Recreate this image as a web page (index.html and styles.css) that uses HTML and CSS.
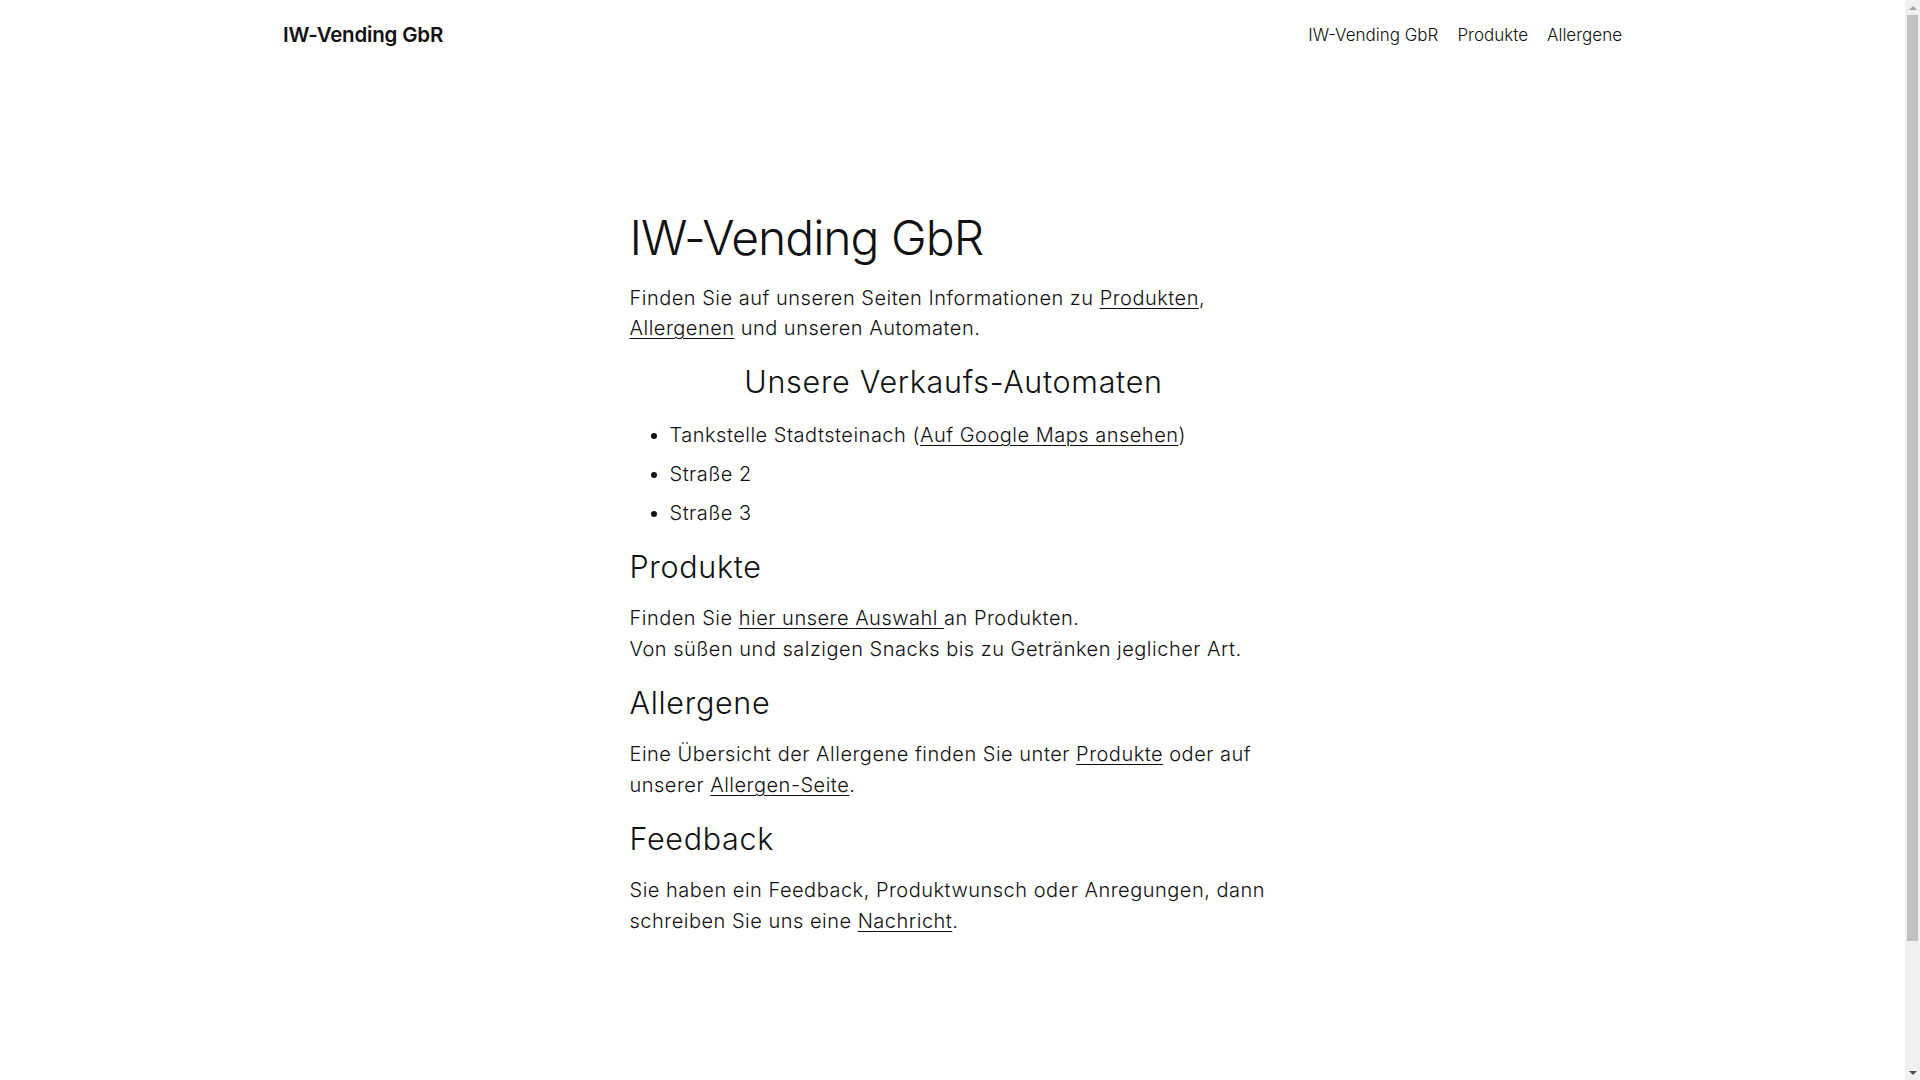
FILE: index.html
```html
<!DOCTYPE html>
<html lang="de">
<head>
<meta charset="utf-8">
<title>IW-Vending GbR</title>
<link rel="stylesheet" href="styles.css">
</head>
<body>
<header class="site-header">
  <a class="site-title" href="#">IW-Vending GbR</a>
  <nav class="site-nav">
    <a href="#">IW-Vending GbR</a>
    <a href="#">Produkte</a>
    <a href="#">Allergene</a>
  </nav>
</header>
<main class="content">
  <h1 class="page-title">IW-Vending GbR</h1>
  <p>Finden Sie auf unseren Seiten Informationen zu <a href="#">Produkten</a>, <a href="#">Allergenen</a> und unseren Automaten.</p>
  <h2 class="centered">Unsere Verkaufs-Automaten</h2>
  <ul class="machines">
    <li>Tankstelle Stadtsteinach (<a href="#">Auf Google Maps ansehen</a>)</li>
    <li>Straße 2</li>
    <li>Straße 3</li>
  </ul>
  <h2>Produkte</h2>
  <p>Finden Sie <a href="#">hier unsere Auswahl </a>an Produkten.<br>Von süßen und salzigen Snacks bis zu Getränken jeglicher Art.</p>
  <h2>Allergene</h2>
  <p>Eine Übersicht der Allergene finden Sie unter <a href="#">Produkte</a> oder auf unserer <a href="#">Allergen-Seite</a>.</p>
  <h2>Feedback</h2>
  <p>Sie haben ein Feedback, Produktwunsch oder Anregungen, dann schreiben Sie uns eine <a href="#">Nachricht</a>.</p>
</main>
<div class="scrollbar" aria-hidden="true">
  <div class="sb-btn sb-up"><span class="arrow-up"></span></div>
  <div class="sb-track"><div class="sb-thumb"></div></div>
  <div class="sb-btn sb-down"><span class="arrow-down"></span></div>
</div>
</body>
</html>
```
FILE: styles.css
```css
html, body {
  margin: 0;
  padding: 0;
}
body {
  background: #ffffff;
  color: #111111;
  font-family: Inter, "Noto Sans", "DejaVu Sans", sans-serif;
  font-size: 20px;
  font-weight: 300;
  line-height: 30.6px;
  letter-spacing: 0.5px;
  padding-right: 15px;
}
a {
  color: inherit;
}
.site-header {
  max-width: 1339px;
  height: 70px;
  margin: 0 auto;
  display: flex;
  align-items: center;
  justify-content: space-between;
  letter-spacing: 0;
}
.site-title {
  font-size: 20.5px;
  font-weight: 600;
  text-decoration: none;
  letter-spacing: -0.2px;
}
.site-nav {
  display: flex;
  gap: 19px;
}
.site-nav a {
  font-size: 17px;
  text-decoration: none;
}
.content {
  width: 648px;
  margin: 0 auto;
  padding: 139px 0 290px 2px;
}
.content h1,
.content h2,
.content p,
.content ul {
  margin: 0;
}
.page-title {
  font-size: 48px;
  font-weight: 300;
  line-height: 1.2;
  letter-spacing: -1px;
}
.page-title + p {
  margin-top: 16px;
}
.content h2 {
  font-size: 30.5px;
  font-weight: 300;
  line-height: 1.2;
  margin-top: 20.7px;
  letter-spacing: 0.7px;
}
.content h2 + p {
  margin-top: 17.5px;
}
.content h2 + ul {
  margin-top: 19px;
}
.centered {
  text-align: center;
}
.machines {
  padding-left: 40px;
}
.machines li + li {
  margin-top: 8.4px;
}
.content a {
  text-decoration: underline;
  text-underline-offset: 3px;
  text-decoration-thickness: 1px;
}

/* classic scrollbar drawn over the right edge */
.scrollbar {
  position: fixed;
  top: 0;
  right: 0;
  width: 15px;
  height: 100vh;
  background: #f1f1f1;
  display: flex;
  flex-direction: column;
}
.sb-btn {
  height: 15px;
  flex: 0 0 15px;
  display: flex;
  align-items: center;
  justify-content: center;
}
.sb-track {
  flex: 1;
  padding: 0 2px;
}
.sb-thumb {
  height: 926px;
  background: #c1c1c1;
}
.arrow-up {
  width: 0;
  height: 0;
  border-left: 4px solid transparent;
  border-right: 4px solid transparent;
  border-bottom: 4px solid #a3a3a3;
}
.arrow-down {
  width: 0;
  height: 0;
  border-left: 4px solid transparent;
  border-right: 4px solid transparent;
  border-top: 4px solid #505050;
}
```
